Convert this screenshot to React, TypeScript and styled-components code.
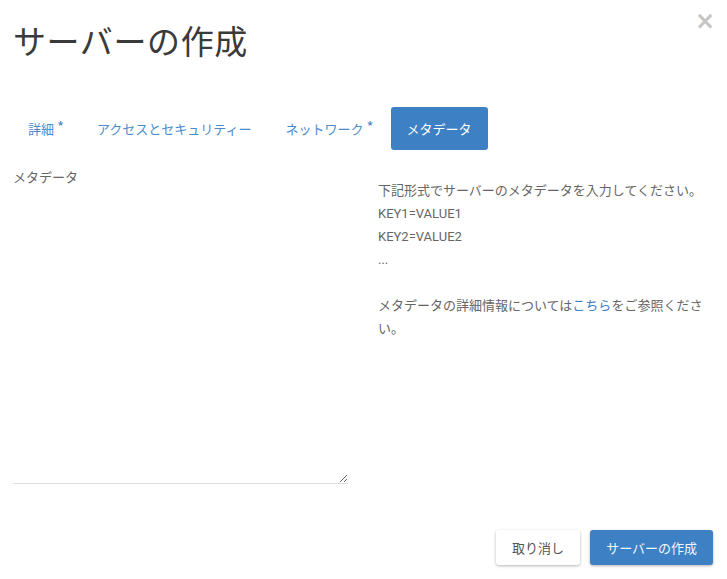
import styled, { createGlobalStyle } from 'styled-components';

const GlobalStyle = createGlobalStyle`
	body {
		margin: 0;
		background: #fff;
		font-family: Roboto, "Noto Sans CJK JP", sans-serif;
		color: #555;
	}
`;

const Modal = styled.div`
	position: relative;
	width: 727px;
	height: 579px;
	box-sizing: border-box;
	padding: 0 13px;
	display: flex;
	flex-direction: column;
`;

const Close = styled.button`
	position: absolute;
	top: 9px;
	right: 12px;
	border: none;
	background: none;
	padding: 0;
	color: #c4c4c4;
	font-size: 24px;
	font-weight: 700;
	line-height: 1;
	font-family: "DejaVu Sans", sans-serif;
	cursor: pointer;
`;

const Title = styled.h1`
	margin: 20px 0 0;
	font-size: 33px;
	font-weight: 400;
	line-height: 46px;
	color: #3a3a3a;
	letter-spacing: 0.6px;
`;

const TabBar = styled.nav`
	display: flex;
	align-items: center;
	margin: 41px 0 0 -1px;
	height: 43px;
`;

const Tab = styled.a<{ $active?: boolean }>`
	display: flex;
	align-items: center;
	height: 43px;
	padding: 0 16px;
	margin-right: ${({ $active }) => ($active ? '0' : '2px')};
	font-size: 13px;
	color: ${({ $active }) => ($active ? '#fff' : '#4a8bcc')};
	background: ${({ $active }) => ($active ? '#3d80c4' : 'transparent')};
	border-radius: 3px;
	text-decoration: none;
	cursor: pointer;
`;

const Required = styled.sup`
	color: #3d80c4;
	font-size: 11px;
	font-weight: 700;
	margin-left: 4px;
	position: relative;
	top: -3px;
`;

const Body = styled.div`
	display: grid;
	grid-template-columns: 350px 1fr;
	margin-top: 19px;
`;

const LeftCol = styled.div`
	padding-right: 15px;
	display: flex;
	flex-direction: column;
`;

const Label = styled.label`
	font-size: 13px;
	color: #666;
	line-height: 18px;
`;

const MetaInput = styled.textarea`
	margin-top: 13px;
	height: 283px;
	border: none;
	border-bottom: 1px solid #ddd;
	outline: none;
	resize: vertical;
	font-family: inherit;
	font-size: 13px;
	padding: 0;
	background: transparent;
`;

const RightCol = styled.div`
	padding-left: 15px;
	padding-top: 10px;
	font-size: 13px;
	color: #666;
	line-height: 23px;
	margin-right: -2px;
`;

const Para = styled.p`
	margin: 0 0 23px;
`;

const Link = styled.a`
	color: #3d80c4;
	text-decoration: none;
`;

const Footer = styled.div`
	display: flex;
	justify-content: flex-end;
	gap: 10px;
	margin-top: auto;
	margin-bottom: 14px;
	margin-right: 1px;
`;

const Button = styled.button<{ $primary?: boolean }>`
	height: 35px;
	padding: 0 16px;
	font-family: inherit;
	font-size: 13px;
	border-radius: 3px;
	border: none;
	color: ${({ $primary }) => ($primary ? '#f2f6fb' : '#555')};
	background: ${({ $primary }) => ($primary ? '#3d80c4' : '#fff')};
	box-shadow: 0 1px 3px rgba(0, 0, 0, 0.3);
	cursor: pointer;
`;

export default function App() {
	return (
		<>
			<GlobalStyle />
			<Modal>
				<Close aria-label="close">×</Close>
				<Title>サーバーの作成</Title>
				<TabBar>
					<Tab>
						詳細<Required>*</Required>
					</Tab>
					<Tab>アクセスとセキュリティー</Tab>
					<Tab>
						ネットワーク<Required>*</Required>
					</Tab>
					<Tab $active>メタデータ</Tab>
				</TabBar>
				<Body>
					<LeftCol>
						<Label>メタデータ</Label>
						<MetaInput />
					</LeftCol>
					<RightCol>
						<Para>
							下記形式でサーバーのメタデータを入力してください。
							<br />
							KEY1=VALUE1
							<br />
							KEY2=VALUE2
							<br />
							...
						</Para>
						<Para>
							メタデータの詳細情報については<Link>こちら</Link>をご参照ください。
						</Para>
					</RightCol>
				</Body>
				<Footer>
					<Button>取り消し</Button>
					<Button $primary>サーバーの作成</Button>
				</Footer>
			</Modal>
		</>
	);
}
